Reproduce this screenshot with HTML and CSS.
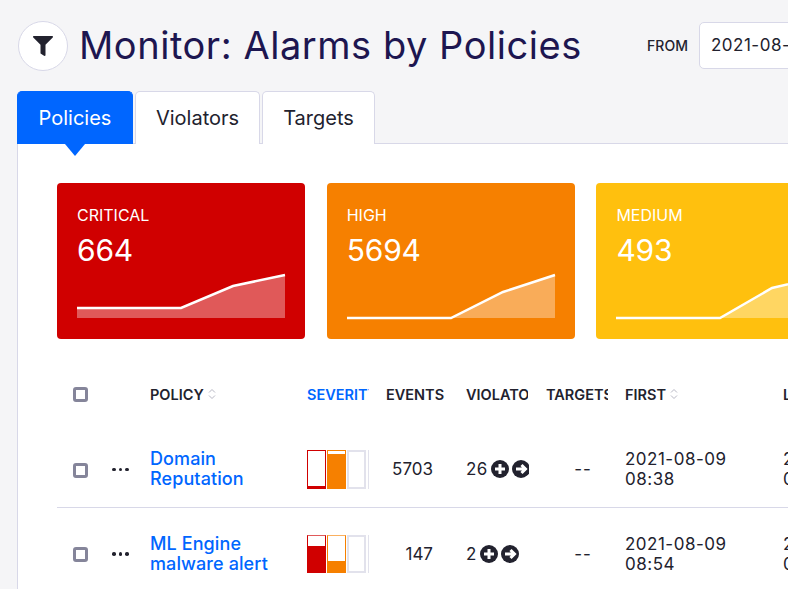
FILE: index.html
```html
<!DOCTYPE html>
<html lang="en">
<head>
<meta charset="utf-8">
<title>Monitor: Alarms by Policies</title>
<link rel="stylesheet" href="styles.css">
</head>
<body>
<div class="page">
  <header class="header">
    <div class="round-icon">
      <svg viewBox="0 0 512 512" width="20" height="20"><path fill="#22222e" d="M487.976 0H24.028C2.71 0-8.047 25.866 7.058 40.971L192 225.941V432c0 7.831 3.821 15.17 10.237 19.662l80 55.98C298.02 518.69 320 507.493 320 487.98V225.941l184.947-184.97C520.021 25.896 509.338 0 487.976 0z"/></svg>
    </div>
    <h1 class="title">Monitor: Alarms by Policies</h1>
    <label class="from-label">FROM</label>
    <div class="date-input">2021-08-09 08:00</div>
  </header>

  <nav class="tabs">
    <a class="tab tab-active">Policies</a>
    <a class="tab tab-violators">Violators</a>
    <a class="tab tab-targets">Targets</a>
  </nav>

  <main class="panel">
    <section class="cards">
      <div class="card card-critical">
        <div class="card-label">CRITICAL</div>
        <div class="card-value">664</div>
        <svg class="spark" viewBox="0 0 208 46" width="208" height="46"><path class="spark-area" d="M0 35H104L156 13L208 2V45H0Z"/><path class="spark-line" d="M0 35H104L156 13L208 2"/></svg>
      </div>
      <div class="card card-high">
        <div class="card-label">HIGH</div>
        <div class="card-value">5694</div>
        <svg class="spark" viewBox="0 0 208 46" width="208" height="46"><path class="spark-area" d="M0 45H104L156 19L208 2V45H0Z"/><path class="spark-line" d="M0 45H104L156 19L208 2"/></svg>
      </div>
      <div class="card card-medium">
        <div class="card-label">MEDIUM</div>
        <div class="card-value">493</div>
        <svg class="spark" viewBox="0 0 208 46" width="208" height="46"><path class="spark-area" d="M0 45H104L156 15L208 3V45H0Z"/><path class="spark-line" d="M0 45H104L156 15L208 3"/></svg>
      </div>
    </section>

    <table class="grid">
      <colgroup>
        <col class="c-check"><col class="c-menu"><col class="c-policy"><col class="c-sev"><col class="c-num"><col class="c-num"><col class="c-tgt"><col class="c-date"><col class="c-last">
      </colgroup>
      <thead>
        <tr>
          <th><span class="check"></span></th>
          <th></th>
          <th><span class="th-in">POLICY <svg class="sort" viewBox="0 0 8 12" width="8" height="12"><path d="M1 4.5L4 1.5L7 4.5M1 7.5L4 10.5L7 7.5"/></svg></span></th>
          <th><span class="th-clip th-active">SEVERITY</span></th>
          <th><span class="th-clip">EVENTS</span></th>
          <th><span class="th-clip">VIOLATORS</span></th>
          <th><span class="th-clip">TARGETS</span></th>
          <th><span class="th-in">FIRST <svg class="sort" viewBox="0 0 8 12" width="8" height="12"><path d="M1 4.5L4 1.5L7 4.5M1 7.5L4 10.5L7 7.5"/></svg></span></th>
          <th><span class="th-in">LAST</span></th>
        </tr>
      </thead>
      <tbody>
        <tr class="row row-first">
          <td><span class="check check-row"></span></td>
          <td><span class="dots"><i></i><i></i><i></i></span></td>
          <td><a class="policy">Domain<br>Reputation</a></td>
          <td>
            <div class="sev">
              <div class="bar bar-red"><div class="fill fill-red" style="height:2px"></div></div>
              <div class="bar bar-orange"><div class="fill fill-orange" style="height:34px"></div></div>
              <div class="bar bar-empty"></div>
              <div class="bar bar-empty"></div>
            </div>
          </td>
          <td class="num">5703</td>
          <td>
            <div class="viol">26
              <svg class="act" viewBox="0 0 18 18" width="18" height="18"><circle cx="9" cy="9" r="9"/><path class="glyph" d="M9 4V14M4 9H14"/></svg>
              <svg class="act" viewBox="0 0 18 18" width="18" height="18"><circle cx="9" cy="9" r="9"/><path class="glyph" d="M4 9H13M9.5 5L13.5 9L9.5 13"/></svg>
            </div>
          </td>
          <td class="dash">--</td>
          <td class="date">2021-08-09<br>08:38</td>
          <td class="date">2021-08-09<br>08:38</td>
        </tr>
        <tr class="row">
          <td><span class="check check-row"></span></td>
          <td><span class="dots"><i></i><i></i><i></i></span></td>
          <td><a class="policy">ML Engine<br>malware alert</a></td>
          <td>
            <div class="sev">
              <div class="bar bar-red-light"><div class="fill fill-red" style="height:26px"></div></div>
              <div class="bar bar-orange-light"><div class="fill fill-orange" style="height:11px"></div></div>
              <div class="bar bar-empty"></div>
              <div class="bar bar-empty"></div>
            </div>
          </td>
          <td class="num">147</td>
          <td>
            <div class="viol">2
              <svg class="act" viewBox="0 0 18 18" width="18" height="18"><circle cx="9" cy="9" r="9"/><path class="glyph" d="M9 4V14M4 9H14"/></svg>
              <svg class="act" viewBox="0 0 18 18" width="18" height="18"><circle cx="9" cy="9" r="9"/><path class="glyph" d="M4 9H13M9.5 5L13.5 9L9.5 13"/></svg>
            </div>
          </td>
          <td class="dash">--</td>
          <td class="date">2021-08-09<br>08:54</td>
          <td class="date">2021-08-09<br>08:54</td>
        </tr>
      </tbody>
    </table>
  </main>
</div>
</body>
</html>
```
FILE: styles.css
```css
* { box-sizing: border-box; }
html, body { margin: 0; height: 100%; overflow: hidden; }
body { background: #f5f5f7; font-family: Inter, "Liberation Sans", sans-serif; color: #22222e; }
.page { width: 1500px; padding: 21px 0 0 17px; }

.header { display: flex; align-items: center; height: 50px; margin-left: 1px; }
.round-icon { width: 50px; height: 50px; flex: none; border: 1px solid #d8d8e8; border-radius: 50%; background: #fff; display: flex; align-items: center; justify-content: center; }
.title { margin: -2px 0 0 11px; width: 568px; flex: none; font-size: 38px; font-weight: 400; line-height: 50px; color: #1d1650; white-space: nowrap; letter-spacing: 0.54px; }
.from-label { font-size: 14px; font-weight: 500; width: 52px; flex: none; margin-top: -2px; letter-spacing: .1px; }
.date-input { width: 300px; height: 47px; flex: none; margin-top: -2px; border: 1px solid #d8d8e8; border-radius: 5px; background: #fff; padding-left: 11px; font-size: 17px; letter-spacing: .5px; line-height: 45px; }

.tabs { display: flex; gap: 2px; margin-top: 20px; height: 52px; }
.tab { display: flex; align-items: center; justify-content: center; height: 53px; border: 1px solid #d8d8e8; border-bottom: 0; border-radius: 5px 5px 0 0; background: #fff; font-size: 20px; position: relative; z-index: 1; }
.tab-active { width: 116px; background: #0066ff; border-color: #0066ff; color: #fff; }
.tab-active::after { content: ""; position: absolute; left: 47px; top: 52px; border: 10px solid transparent; border-top: 12px solid #0066ff; border-bottom: 0; }
.tab-violators { width: 125px; }
.tab-targets { width: 113px; }

.panel { background: #fff; border-top: 1px solid #d8d8e8; border-left: 1px solid #d8d8e8; padding: 39px 0 0 39px; height: 600px; }
.cards { display: flex; gap: 21.7px; }
.card { width: 248px; height: 156px; flex: none; border-radius: 4px; padding: 24px 20px 0; color: #fff; }
.card-critical { background: #d00000; }
.card-high { background: #f68000; }
.card-medium { background: #ffc00e; }
.card-label { font-size: 16px; line-height: 16px; }
.card-value { font-size: 30px; line-height: 36px; margin-top: 9px; letter-spacing: -.2px; }
.spark { display: block; margin-top: 5px; overflow: visible; }
.spark-area { fill: rgba(255,255,255,.35); }
.spark-line { fill: none; stroke: #fff; stroke-width: 2.5; }

.grid { border-collapse: collapse; table-layout: fixed; width: 926px; margin-top: 33px; }
.c-check { width: 53px; }
.c-menu { width: 40px; }
.c-policy { width: 157px; }
.c-sev { width: 79px; }
.c-num { width: 80px; }
.c-tgt { width: 79px; }
.c-date { width: 158px; }
.c-last { width: 200px; }
th { height: 44px; padding: 0; text-align: left; font-size: 14.5px; font-weight: 600; vertical-align: middle; }
td { padding: 0; font-size: 17px; vertical-align: middle; }
.check { display: block; width: 15px; height: 15px; margin-left: 16px; border: 3px solid #85859a; border-radius: 3px; background: #fff; }
.check-row { margin-top: 2px; }
.th-in { display: flex; align-items: center; gap: 4px; white-space: nowrap; }
.th-clip { display: block; width: 62px; overflow: hidden; white-space: nowrap; }
.th-active { color: #0066ff; }
.sort { fill: none; stroke: #b8b8c4; stroke-width: 1; }

.row { height: 93px; border-top: 1px solid #d8d8e8; }
.row-first { height: 91px; border-top: 0; }
.row-first td { padding-top: 16px; }
.dots { display: flex; gap: 3px; margin-left: 2px; }
.dots i { width: 3.5px; height: 3.5px; border-radius: 50%; background: #22222e; }
.policy { font-size: 18px; font-weight: 500; line-height: 20px; color: #0066ff; display: block; letter-spacing: .1px; }
.sev { display: flex; gap: 1.2px; width: 62px; overflow: hidden; }
.bar { width: 19px; height: 38.5px; flex: none; border: 1px solid #dcdce8; display: flex; flex-direction: column; justify-content: flex-end; background: #fff; }
.bar-empty { border-width: 2px; border-color: #e2e2ec; }
.bar-red { border-color: #d00000; }
.bar-orange { border-color: #f68000; }
.bar-red-light { border-color: #d00000; border-top-color: #e05a5a; }
.bar-orange-light { border-color: #f68000; border-top-color: #fab060; }
.fill-red { background: #d00000; }
.fill-orange { background: #f68000; }
.num { text-align: right; padding-right: 33px; }
.viol { display: flex; align-items: center; gap: 3px; width: 63px; overflow: hidden; font-size: 17px; letter-spacing: .3px; }
.act { flex: none; }
.act circle { fill: #22222e; }
.glyph { fill: none; stroke: #fff; stroke-width: 3; }
.dash { text-align: center; padding-right: 5px; letter-spacing: 1px; }
.date { font-size: 17px; letter-spacing: .5px; line-height: 20px; }
```
